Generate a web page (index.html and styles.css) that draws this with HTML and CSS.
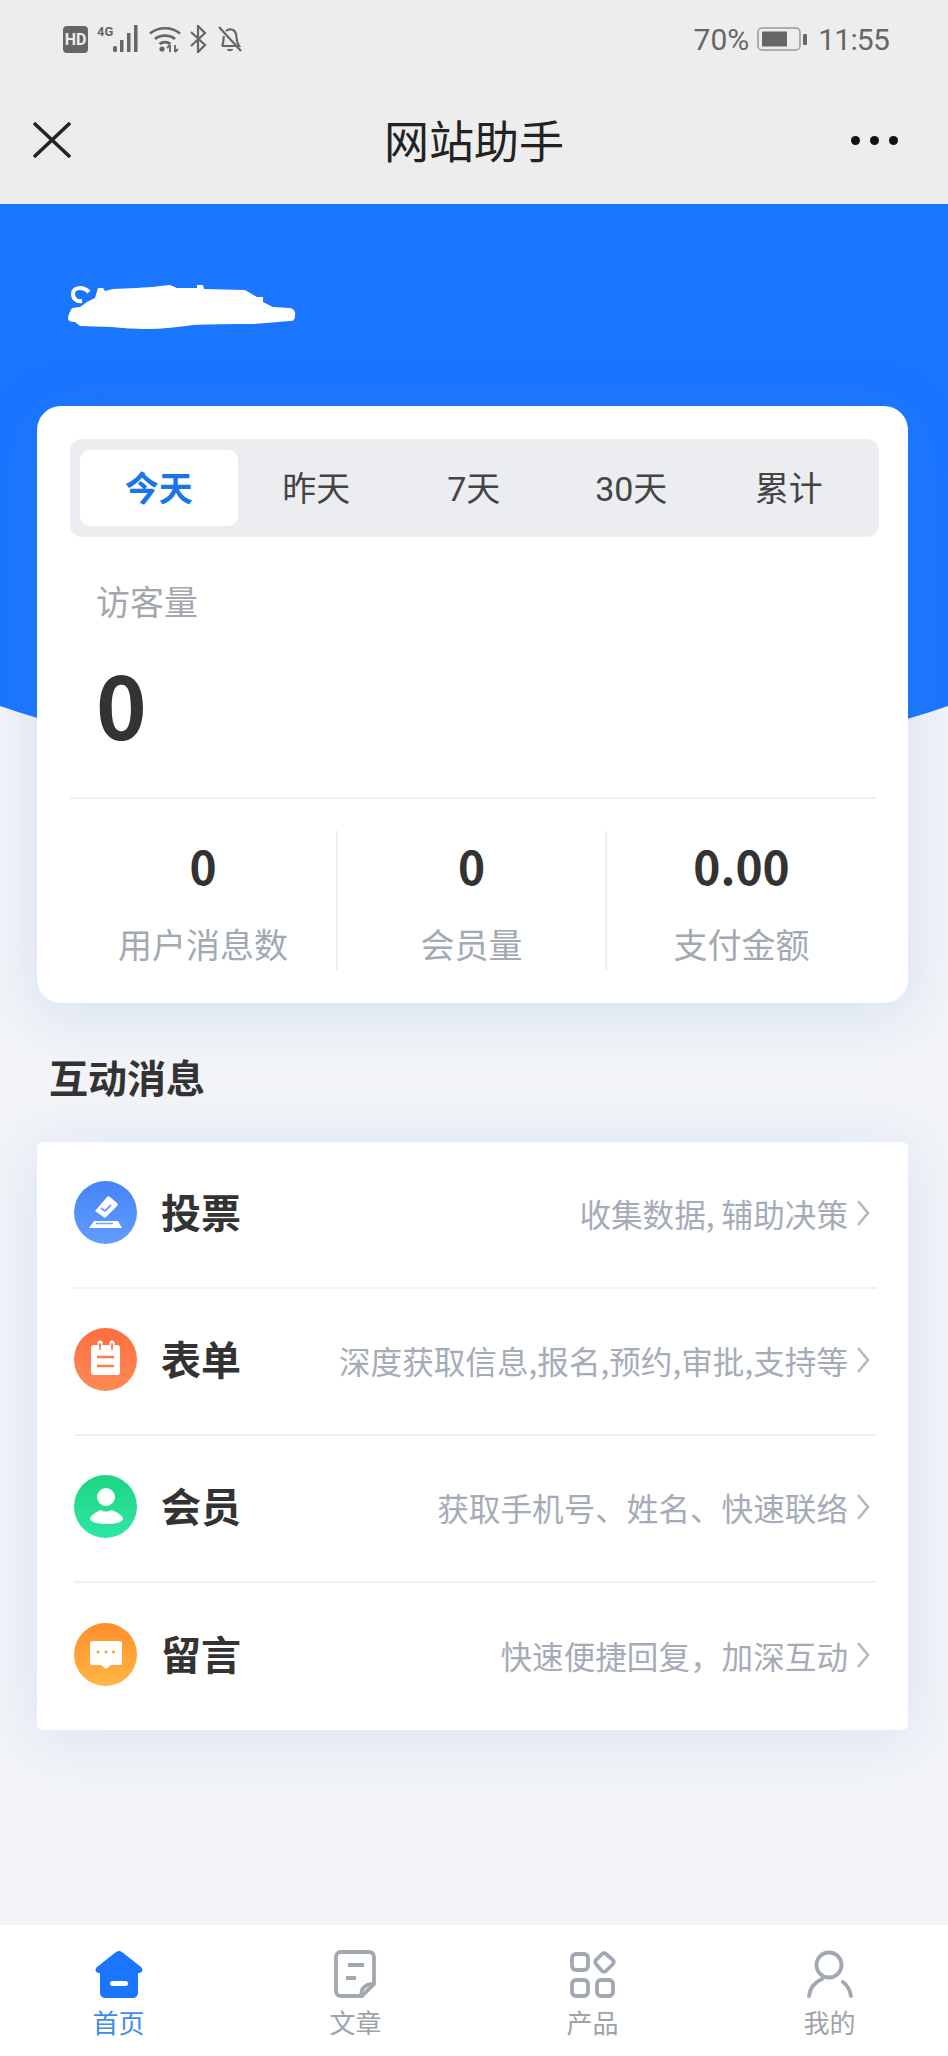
FILE: index.html
```html
<!DOCTYPE html>
<html lang="zh-CN">

<head>
	<meta charset="UTF-8">
	<meta name="viewport" content="width=device-width, initial-scale=1.0">
	<title>网站助手</title>
	<link rel="stylesheet" href="styles.css">
</head>

<body>
	<div class="statusbar">
		<div class="status-left">
			<span class="hd">HD</span>
			<span class="net">4G</span>
			<svg class="ic-signal" viewBox="0 0 28 28"><g fill="#666"><rect x="0" y="21" width="4" height="6" rx="1.5"/><rect x="7" y="15" width="3.5" height="12"/><rect x="14" y="8" width="3.5" height="19"/><rect x="21" y="0" width="3.5" height="27"/></g></svg>
			<svg class="ic-wifi" viewBox="0 0 32 28"><g fill="none" stroke="#666" stroke-width="2.6"><path d="M1 8.500C9 1.500 23 1.500 31 8.500"/><path d="M6 14C11 9.500 21 9.500 26 14"/><path d="M10.500 19C13.500 16.500 18.500 16.500 21.500 19"/></g><circle cx="13" cy="24" r="2.600" fill="#666"/><path d="M21 20v7M26 20v7M21 20l-3 3M26 27l3-3" fill="none" stroke="#666" stroke-width="1.800"/></svg>
			<svg class="ic-bt" viewBox="0 0 18 28"><path d="M2 7l14 13-7 7V1l7 7L2 21" fill="none" stroke="#666" stroke-width="2.200"/></svg>
			<svg class="ic-bell" viewBox="0 0 26 28"><g fill="none" stroke="#666" stroke-width="2.200"><path d="M5 21c2-3 1-6 2-10M9 6c3-3 9-2 10 3 1 4 0 8 3 12H5"/><path d="M2 2l22 24"/></g><path d="M10 24h6c0 3-6 3-6 0z" fill="#666"/></svg>
		</div>
		<div class="status-right">
			<span>70%</span>
			<svg class="ic-battery" viewBox="0 0 50 24"><rect x="1" y="1" width="42" height="22" rx="4" fill="none" stroke="#999" stroke-width="1.500"/><rect x="5" y="4.500" width="25" height="15" fill="#666"/><rect x="46" y="7" width="4" height="11" rx="1" fill="#666"/></svg>
			<span class="clock">11:55</span>
		</div>
	</div>

	<header class="navbar">
		<svg class="ic-close" viewBox="0 0 38 36"><path d="M1 1l36 34M37 1L1 35" fill="none" stroke="#222" stroke-width="3.400"/></svg>
		<h1>网站助手</h1>
		<div class="more"><i></i><i></i><i></i></div>
	</header>

	<main>
		<div class="hero">
			<svg class="blot" viewBox="0 0 228 44"><path d="M27 13L30 3 35 3 37 6 45 4C60 3 78 3 92 1L102 0 109 3 129 3 129 0 135 0 136 4 177 5 189 12 195 12 195 17 205 22 222 23C226 24 228 27 227 30 227 34 226 36 222 36L185 39C165 39 145 39 125 40 110 42 95 44 79 44 65 44 55 43 42 42L12 41 7 37C3 37 0 36 0 33 0 30 2 27 4 23L12 22 19 17z" fill="#fff"/><path d="M21 7C15 1 5 2 5 9 5 14 9 17 14 16" fill="none" stroke="#fff" stroke-width="4"/></svg>
		</div>

		<section class="card">
			<div class="tabs">
				<div class="tab active">今天</div>
				<div class="tab">昨天</div>
				<div class="tab">7天</div>
				<div class="tab">30天</div>
				<div class="tab">累计</div>
			</div>
			<div class="visit-label">访客量</div>
			<div class="visit-num">0</div>
			<div class="stats">
				<div class="stat">
					<div class="stat-num">0</div>
					<div class="stat-label">用户消息数</div>
				</div>
				<div class="stat">
					<div class="stat-num">0</div>
					<div class="stat-label">会员量</div>
				</div>
				<div class="stat">
					<div class="stat-num">0.00</div>
					<div class="stat-label">支付金额</div>
				</div>
			</div>
		</section>

		<h2 class="section-title">互动消息</h2>

		<section class="list">
			<div class="row">
				<svg class="row-icon" viewBox="0 0 63 63">
					<defs><linearGradient id="gBlue" x1="0" y1="0" x2="0" y2="1"><stop offset="0" stop-color="#4683f7"/><stop offset="1" stop-color="#619dff"/></linearGradient></defs>
					<circle cx="31.500" cy="31.500" r="31.500" fill="url(#gBlue)"/>
					<path d="M21 30l12-14c1-1 2-1 3 0l7 6c1 1 1 2 0 3L31 37 21 30z" fill="#fff"/>
					<path d="M27 27l4 3 6-6" fill="none" stroke="#6fa3f8" stroke-width="2"/>
					<path d="M20 40h24l4 7H15z" fill="#fff"/>
					<path d="M22 42.500h17" stroke="#6fa3f8" stroke-width="1.500"/>
				</svg>
				<span class="row-name">投票</span>
				<span class="row-desc">收集数据, 辅助决策</span>
				<svg class="chevron" viewBox="0 0 14 26"><path d="M2 1l10 12L2 25" fill="none" stroke="#b4b9c1" stroke-width="2.600"/></svg>
			</div>
			<div class="row">
				<svg class="row-icon" viewBox="0 0 63 63">
					<defs><linearGradient id="gRed" x1="0" y1="0" x2="0" y2="1"><stop offset="0" stop-color="#ff6d3f"/><stop offset="1" stop-color="#ff8a55"/></linearGradient></defs>
					<circle cx="31.500" cy="31.500" r="31.500" fill="url(#gRed)"/>
					<rect x="17" y="17" width="29" height="30" rx="3" fill="#fff"/>
					<path d="M26 15v7M38 15v7" stroke="#fff" stroke-width="5" stroke-linecap="round"/>
					<path d="M26 16v5M38 16v5" stroke="#ff7a4a" stroke-width="1.800" stroke-linecap="round"/>
					<path d="M23 29h17M23 38h17" stroke="#ff7a4a" stroke-width="2.600"/>
				</svg>
				<span class="row-name">表单</span>
				<span class="row-desc">深度获取信息,报名,预约,审批,支持等</span>
				<svg class="chevron" viewBox="0 0 14 26"><path d="M2 1l10 12L2 25" fill="none" stroke="#b4b9c1" stroke-width="2.600"/></svg>
			</div>
			<div class="row">
				<svg class="row-icon" viewBox="0 0 63 63">
					<defs><linearGradient id="gGreen" x1="0" y1="0" x2="0" y2="1"><stop offset="0" stop-color="#1dd47f"/><stop offset="1" stop-color="#2ee7a6"/></linearGradient></defs>
					<circle cx="31.500" cy="31.500" r="31.500" fill="url(#gGreen)"/>
					<circle cx="32" cy="22" r="9" fill="#fff"/>
					<path d="M16 44c0-4 8-8 11-9 3 2 7 2 10 0 4 1 12 5 12 9 0 3-8 5-16 5s-17-2-17-5z" fill="#fff"/>
				</svg>
				<span class="row-name">会员</span>
				<span class="row-desc">获取手机号、姓名、快速联络</span>
				<svg class="chevron" viewBox="0 0 14 26"><path d="M2 1l10 12L2 25" fill="none" stroke="#b4b9c1" stroke-width="2.600"/></svg>
			</div>
			<div class="row last">
				<svg class="row-icon" viewBox="0 0 63 63">
					<defs><linearGradient id="gOrange" x1="0" y1="0" x2="0" y2="1"><stop offset="0" stop-color="#ff8e2a"/><stop offset="1" stop-color="#ffb646"/></linearGradient></defs>
					<circle cx="31.500" cy="31.500" r="31.500" fill="url(#gOrange)"/>
					<path d="M18 18h28c1 0 2 1 2 2v20c0 1-1 2-2 2H37l-5 4-5-4h-9c-1 0-2-1-2-2V20c0-1 1-2 2-2z" fill="#fff"/>
					<g fill="#ff9d38"><circle cx="24" cy="29" r="1.600"/><circle cx="32" cy="29" r="1.600"/><circle cx="39.500" cy="29" r="1.600"/></g>
				</svg>
				<span class="row-name">留言</span>
				<span class="row-desc">快速便捷回复，加深互动</span>
				<svg class="chevron" viewBox="0 0 14 26"><path d="M2 1l10 12L2 25" fill="none" stroke="#b4b9c1" stroke-width="2.600"/></svg>
			</div>
		</section>
	</main>

	<nav class="tabbar">
		<div class="nav-item active">
			<svg class="nav-icon" viewBox="0 0 48 48"><path d="M21 2c2-1.500 4-1.500 6 0l19 15c3 3 1 6-3 6v19c0 4-2 6-6 6H11c-4 0-6-2-6-6V23c-4 0-6-3-3-6z" fill="#1a75ff"/><rect x="15" y="31" width="18" height="5" rx="2.500" fill="#fff"/></svg>
			<span>首页</span>
		</div>
		<div class="nav-item">
			<svg class="nav-icon" viewBox="0 0 48 48"><g fill="none" stroke="#a2a8b2" stroke-width="3.800"><path d="M30 46H9c-3 0-5-2-5-5V7c0-3 2-5 5-5h28c3 0 5 2 5 5v27z"/><path d="M30 46c-2-6 2-12 12-12"/><path d="M16 15h16M14 28h10"/></g></svg>
			<span>文章</span>
		</div>
		<div class="nav-item">
			<svg class="nav-icon" viewBox="0 0 48 48"><g fill="none" stroke="#a2a8b2" stroke-width="3.800"><rect x="3" y="4" width="16" height="16" rx="4"/><rect x="3" y="30" width="16" height="16" rx="4"/><rect x="28" y="30" width="16" height="16" rx="4"/><path d="M33 4c1-1 3-1 4 0l7 6c1 1 1 3 0 4l-7 7c-1 1-3 1-4 0l-6-7c-1-1-1-3 0-4z"/></g></svg>
			<span>产品</span>
		</div>
		<div class="nav-item">
			<svg class="nav-icon" viewBox="0 0 48 48"><g fill="none" stroke="#a2a8b2" stroke-width="3.800" stroke-linecap="round"><circle cx="23" cy="15" r="12.500"/><path d="M3 46c1-8 6-14 13-17"/><path d="M45 46c-1-6-4-11-8-14"/></g></svg>
			<span>我的</span>
		</div>
	</nav>
</body>

</html>
```

FILE: styles.css
```css
* {
	box-sizing: border-box;
}

body {
	font-family: Roboto, "Noto Sans CJK SC", sans-serif;
	margin: 0;
	width: 948px;
	height: 2056px;
	display: flex;
	flex-direction: column;
	background: #f2f4f8;
	color: #333;
	overflow: hidden;
}

/* status bar */
.statusbar {
	height: 80px;
	background: #ededed;
	display: flex;
	align-items: center;
	justify-content: space-between;
	padding: 0 59px 2px 63px;
	color: #666;
	font-size: 30px;
}

.status-left,
.status-right {
	display: flex;
	align-items: center;
}

.hd {
	width: 25px;
	height: 27px;
	border-radius: 4px;
	background: #666;
	color: #ededed;
	font-size: 16px;
	font-weight: 700;
	line-height: 27px;
	text-align: center;
}

.net {
	font-size: 13px;
	font-weight: 700;
	line-height: 13px;
	width: 16px;
	margin: 0 0 15px 9px;
}

.ic-signal {
	width: 28px;
	height: 28px;
}

.ic-wifi {
	width: 32px;
	height: 28px;
	margin-left: 8px;
}

.ic-bt {
	width: 18px;
	height: 28px;
	margin-left: 8px;
}

.ic-bell {
	width: 26px;
	height: 28px;
	margin-left: 10px;
}

.ic-battery {
	width: 50px;
	height: 24px;
	margin: 0 11px 0 8px;
}

.clock {
	letter-spacing: -0.8px;
}

/* title bar */
.navbar {
	height: 124px;
	background: #ededed;
	display: grid;
	grid-template-columns: 1fr auto 1fr;
	align-items: center;
	padding: 0 33px 4px 33px;
}

.navbar h1 {
	margin: 7px 0 0 0;
	font-size: 45px;
	font-weight: 400;
	line-height: 60px;
	color: #222;
}

.ic-close {
	width: 38px;
	height: 36px;
}

.more {
	justify-self: end;
	display: flex;
	gap: 10px;
	margin-right: 17px;
}

.more i {
	width: 9px;
	height: 9px;
	border-radius: 50%;
	background: #111;
}

/* page */
main {
	flex: 1;
	overflow: hidden;
}

.hero {
	margin: 0 -142px;
	height: 567px;
	padding: 81px 0 0 210px;
	background: #1a75ff;
	border-radius: 0 0 50% 50% / 0 0 180px 180px;
}

.blot {
	display: block;
	width: 228px;
	height: 44px;
}

.card {
	margin: -365px 40px 0 37px;
	padding: 33px 29px 33px 33px;
	background: #fff;
	border-radius: 24px;
	box-shadow: 0 10px 60px rgba(80, 135, 200, 0.18);
	position: relative;
}

.tabs {
	display: flex;
	height: 98px;
	padding: 11px 10px;
	background: #ecedf1;
	border-radius: 12px;
}

.tab {
	width: 157.500px;
	font-size: 34px;
	line-height: 78px;
	height: 76px;
	text-align: center;
	color: #444;
	border-radius: 10px;
}

.tab.active {
	background: #fff;
	color: #1a75e8;
	font-weight: 700;
}

.visit-label {
	margin: 43px 0 0 26px;
	font-size: 34px;
	line-height: 46px;
	color: #a3a7ad;
}

.visit-num {
	margin: 27px 0 0 26px;
	font-family: "Noto Sans CJK SC", sans-serif;
	font-size: 86px;
	font-weight: 700;
	line-height: 100px;
	color: #333;
}

.stats {
	margin-top: 44px;
	margin-right: 3px;
	padding-top: 32px;
	border-top: 2px solid #f0f0f0;
	display: grid;
	grid-template-columns: 266px 269px 1fr;
}

.stat {
	height: 139px;
	padding-top: 4px;
	text-align: center;
	border-left: 2px solid #eeeeee;
}

.stat:first-child {
	border-left: none;
}

.stat-num {
	font-family: "Noto Sans CJK SC", sans-serif;
	font-size: 46px;
	font-weight: 700;
	line-height: 60px;
	color: #333;
}

.stat-label {
	margin-top: 28px;
	font-size: 34px;
	line-height: 46px;
	color: #a3a9b1;
}

.section-title {
	margin: 49px 0 34px 49px;
	font-size: 39px;
	font-weight: 700;
	line-height: 56px;
	color: #333;
}

.list {
	margin: 0 40px 0 37px;
	background: #fff;
	border-radius: 6px;
	box-shadow: 0 6px 60px rgba(80, 135, 200, 0.16);
}

.row {
	height: 147px;
	margin: 0 31px 0 37px;
	padding: 0 7px 4px 0;
	display: flex;
	align-items: center;
	border-bottom: 2px solid #f0f0f0;
}

.row.last {
	border-bottom: none;
}

.row-icon {
	width: 63px;
	height: 63px;
	flex: none;
}

.row-name {
	margin-left: 24px;
	padding-bottom: 3px;
	font-size: 40px;
	font-weight: 700;
	color: #333;
}

.row-desc {
	margin-left: auto;
	font-family: "Noto Sans CJK SC", sans-serif;
	font-size: 31.600px;
	color: #a5acb7;
}

.chevron {
	width: 14px;
	height: 26px;
	margin-left: 8px;
}

/* bottom tabs */
.tabbar {
	height: 131px;
	padding-top: 25px;
	background: #fff;
	display: grid;
	grid-template-columns: repeat(4, 1fr);
}

.nav-item {
	display: flex;
	flex-direction: column;
	align-items: center;
	font-size: 26px;
	line-height: 30px;
	color: #9ea3ab;
}

.nav-item.active {
	color: #3f8be8;
}

.nav-icon {
	width: 48px;
	height: 48px;
	margin-bottom: 11px;
}
```
